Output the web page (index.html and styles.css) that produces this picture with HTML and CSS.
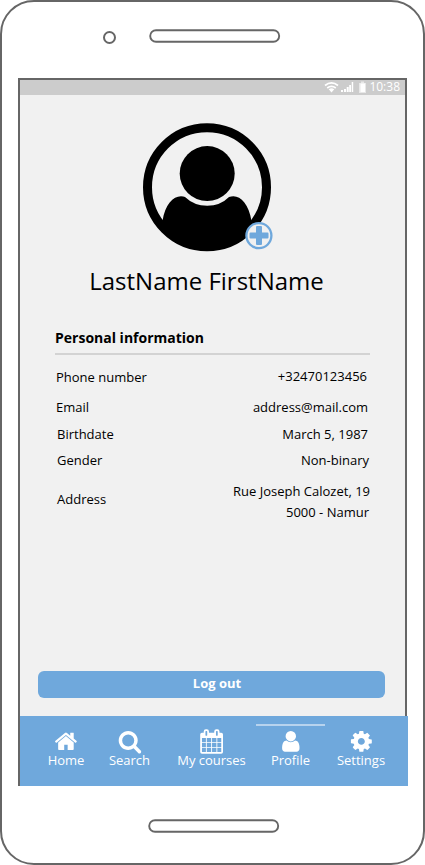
FILE: index.html
```html
<!DOCTYPE html>
<html lang="en">
<head>
<meta charset="utf-8">
<title>Profile</title>
<link rel="stylesheet" href="styles.css">
</head>
<body>
<div class="phone">
  <header class="phone-top">
    <span class="camera"></span>
    <svg class="speaker" width="132" height="14" viewBox="0 0 132 14"><rect x="1.200" y="1.200" width="129" height="11.600" rx="5.800"/></svg>
  </header>
  <div class="screen">
    <div class="status-bar">
      <svg class="status-icons" width="44" height="15" viewBox="0 0 44 15">
        <g fill="none" stroke="#fff" stroke-width="1.700"><path d="M1 5.500Q7.500 .2 14 5.500M3.200 8Q7.500 4.600 11.800 8"/></g>
        <path fill="#fff" d="M4.700 9.200Q7.500 7.200 10.300 9.200L7.500 12.500ZM17 10h2v2h-2zM20 9h2v3h-2zM22.700 7h2v5h-2zM25.200 5h1.800v7h-1.800zM27.700 2h1.500v10h-1.500z"/>
        <path fill="#fff" fill-opacity=".55" d="M35 3h2V1.500h3V3h2v10H35z"/>
        <path fill="#fff" d="M36.500 3.500h4.500v8.500h-4.500z"/>
      </svg>
      <span class="clock">10:38</span>
    </div>
    <main class="content">
      <div class="avatar">
        <svg width="160" height="150" viewBox="0 0 160 150">
          <circle cx="77" cy="77.200" r="59.500" fill="none" stroke="#000" stroke-width="9"/>
          <circle cx="77.200" cy="63.600" r="27.500"/>
          <path d="M32.500 111C35 95 43 86.300 51 86.300Q53.500 86.300 55 87Q64 95.700 77.200 95.700Q90.500 95.700 99 87Q101 86.300 103.500 86.300C111 86.300 119 95 121.500 111Q106 138 77 138Q48 138 32.500 111Z"/>
          <circle cx="128.900" cy="125.600" r="12.500" fill="#f1f1f1" stroke="#6fa8dc" stroke-width="2.300"/>
          <path fill="#6fa8dc" d="M127 116h4q1 0 1 1v5.500h5.500q1 0 1 1v4q0 1-1 1H132v5.500q0 1-1 1h-4q-1 0-1-1V128.500h-5.500q-1 0-1-1v-4q0-1 1-1H126V117q0-1 1-1z"/>
        </svg>
      </div>
      <h1 class="name">LastName FirstName</h1>
      <section class="info">
        <h2 class="info-title">Personal information</h2>
        <dl class="info-list">
          <div class="row row-phone"><dt>Phone number</dt><dd>+32470123456</dd></div>
          <div class="row row-email"><dt>Email</dt><dd>address@mail.com</dd></div>
          <div class="row row-birth"><dt>Birthdate</dt><dd>March 5, 1987</dd></div>
          <div class="row row-gender"><dt>Gender</dt><dd>Non-binary</dd></div>
          <div class="row row-address"><dt>Address</dt><dd>Rue Joseph Calozet, 19<br><span class="city">5000 - Namur</span></dd></div>
        </dl>
      </section>
      <button class="logout" type="button">Log out</button>
    </main>
    <nav class="tabs">
      <a class="tab">
        <svg class="icon" viewBox="0 0 26 28"><g transform="translate(1.700 3.200) scale(.0135)"><path d="M1408 992v480q0 26-19 45t-45 19H960v-384H704v384H320q-26 0-45-19t-19-45V992q0-1 .5-3t.5-3l575-474 575 474q1 2 1 6zm223-69l-62 74q-8 9-21 11h-3q-13 0-21-7L832 424l-692 577q-12 8-24 7-13-2-21-11l-62-74q-8-10-7-23.500T37 878l719-599q32-26 76-26t76 26l244 204V288q0-14 9-23t23-9h192q14 0 23 9t9 23v408l219 182q10 8 11 21.500t-7 23.500z"/></g></svg>
        <span>Home</span>
      </a>
      <a class="tab">
        <svg class="icon" viewBox="0 0 26 28"><g transform="translate(1.700 3.200) scale(.0135)"><path d="M1152 832q0-185-131.500-316.500T704 384 387.500 515.500 256 832t131.500 316.500T704 1280t316.500-131.500T1152 832zm512 832q0 52-38 90t-90 38q-54 0-90-38l-343-342q-179 124-399 124-143 0-273.500-55.500t-225-150-150-225T0 832t55.500-273.500 150-225 225-150T704 128t273.500 55.500 225 150 150 225T1408 832q0 220-124 399l343 343q37 37 37 90z"/></g></svg>
        <span>Search</span>
      </a>
      <a class="tab tab-courses">
        <svg class="icon" viewBox="0 0 26 28"><g transform="translate(1.200 3.200) scale(.0137)"><path fill-rule="evenodd" d="M128 256H256V160Q256 0 416 0h64q160 0 160 160v96h384V160q0-160 160-160h64q160 0 160 160v96h128q128 0 128 128v1280q0 128-128 128H128Q0 1792 0 1664V384Q0 256 128 256zM384 160v288q0 32 32 32h64q32 0 32-32V160q0-32-32-32h-64q-32 0-32 32zm768 0v288q0 32 32 32h64q32 0 32-32V160q0-32-32-32h-64q-32 0-32 32zM128 640v288h288V640zm352 0v288h320V640zm384 0v288h320V640zm384 0v288h288V640zM128 992v320h288V992zm352 0v320h320V992zm384 0v320h320V992zm384 0v320h288V992zM128 1376v288h288v-288zm352 0v288h320v-288zm384 0v288h320v-288zm384 0v288h288v-288z"/></g></svg>
        <span>My courses</span>
      </a>
      <a class="tab active">
        <svg class="icon" viewBox="0 0 26 28"><g transform="translate(4.100 3.200) scale(.0136)"><path d="M1280 1399q0 109-62.500 187t-150.500 78H213q-88 0-150.500-78T0 1399q0-85 8.500-160.500t31.500-152 58.500-131 94-89T327 832q131 128 313 128t313-128q76 0 134.500 34.500t94 89 58.500 131 31.500 152 8.500 160.500zm-256-887q0 159-112.500 271.500T640 896 368.500 783.500 256 512t112.500-271.500T640 128t271.500 112.500T1024 512z"/></g></svg>
        <span>Profile</span>
      </a>
      <a class="tab">
        <svg class="icon" viewBox="0 0 26 28"><g transform="translate(2.900 3.200) scale(.0136)"><path d="M1024 896q0-106-75-181t-181-75-181 75-75 181 75 181 181 75 181-75 75-181zm512-109v222q0 12-8 23t-20 13l-185 28q-19 54-39 91 35 50 107 138 10 12 10 25t-9 23q-27 37-99 108t-94 71q-12 0-26-9l-138-108q-44 23-91 38-16 136-29 186-7 28-36 28H657q-14 0-24.500-8.500T621 1634l-28-184q-49-16-90-37l-141 107q-10 9-25 9-14 0-25-11-126-114-165-168-7-10-7-23 0-12 8-23 15-21 51-66.500t54-70.500q-27-50-41-99L29 1041q-13-2-21-12.500T0 1005V783q0-12 8-23t19-13l186-28q14-46 39-92-40-57-107-138-10-12-10-24 0-10 9-23 26-36 98.500-107.500T337 263q13 0 26 10l138 107q44-23 91-38 16-136 29-186 7-28 36-28h222q14 0 24.500 8.500T915 158l28 184q49 16 90 37l142-107q9-9 24-9 13 0 25 10 129 119 165 170 7 8 7 22 0 12-8 23-15 21-51 66.500t-54 70.500q26 50 41 98l183 28q13 2 21 12.500t8 23.500z"/></g></svg>
        <span>Settings</span>
      </a>
    </nav>
  </div>
  <footer class="phone-bottom">
    <svg class="speaker" width="132" height="14" viewBox="0 0 132 14"><rect x="1.200" y="1.200" width="129" height="11.600" rx="5.800"/></svg>
  </footer>
</div>
</body>
</html>
```
FILE: styles.css
```css
* { box-sizing: border-box; }
body {
  margin: 0;
  background: #fff;
  color: #000;
  font: 13px/18px "Open Sans", "Noto Sans", sans-serif;
}
h1, h2, dl, dd { margin: 0; }
svg { display: block; flex: none; }

.phone {
  display: flex;
  flex-direction: column;
  width: 425px;
  height: 865px;
  border: 2px solid #666;
  border-radius: 34px;
}
.phone-top {
  display: flex;
  height: 76px;
  padding: 27px 0 0 101px;
}
.camera {
  width: 13px;
  height: 13px;
  margin: 2px 33px 0 0;
  border: 2px solid #666;
  border-radius: 50%;
}
.speaker rect { fill: #fff; stroke: #666; stroke-width: 1.9; }
.phone-bottom { padding: 33px 0 0 146px; }

.screen {
  display: flex;
  flex-direction: column;
  width: 389px;
  height: 708px;
  margin-left: 16px;
  border: 2px solid #666;
  border-bottom: 0;
  background: #f1f1f1;
}
.status-bar {
  display: flex;
  justify-content: flex-end;
  height: 15px;
  padding-right: 5px;
  background: #ccc;
  color: #fff;
}
.clock {
  margin-left: 1px;
  font-size: 12px;
  line-height: 14px;
}
.content {
  display: flex;
  flex-direction: column;
  height: 621px;
}
.avatar { margin: 15px 0 0 110px; }
.name {
  margin-top: 4px;
  padding-right: 12px;
  font-size: 24px;
  font-weight: 400;
  line-height: 34px;
  text-align: center;
}
.info { width: 315px; margin: 30px 0 0 35px; }
.info-title {
  height: 27px;
  border-bottom: 2px solid #d3d3d3;
  font-size: 14px;
  line-height: 19px;
}
.info-list { padding-top: 13px; }
.row {
  display: flex;
  align-items: center;
  justify-content: space-between;
  padding: 0 2px 0 1px;
}
.row dd { text-align: right; }
.row-phone { height: 30px; align-items: flex-start; padding-right: 3px; }
.row-phone dd { margin-top: -1px; }
.row-email { height: 18px; }
.row-birth { height: 18px; margin-top: 9px; padding-left: 2px; }
.row-gender { height: 18px; margin-top: 8px; padding: 0 1px 0 2px; }
.row-address { margin-top: 12px; padding: 0 0 0 2px; line-height: 21px; }
.row-address dt { padding-bottom: 6px; }
.city { padding-right: 1px; }
.logout {
  width: 347px;
  height: 27px;
  margin: auto 0 18px 18px;
  padding: 0 0 4px 11px;
  border: 0;
  border-radius: 6px;
  background: #6fa8dc;
  color: #fff;
  font: 700 13px/18px "Open Sans", "Noto Sans", sans-serif;
}
.tabs {
  display: grid;
  grid-template-columns: 62px 65px 94px 69px 72px;
  width: 388px;
  height: 70px;
  padding: 8px 0 0 15px;
  background: #6fa8dc;
  color: #fff;
}
.tab {
  display: flex;
  flex-direction: column;
  align-items: center;
  border-top: 2px solid transparent;
  white-space: nowrap;
}
.tab-courses { padding-left: 5px; }
.active { border-top-color: #b7d3ee; }
.icon {
  width: 26px;
  height: 28px;
  margin-bottom: -3px;
  fill: #fff;
}
```
